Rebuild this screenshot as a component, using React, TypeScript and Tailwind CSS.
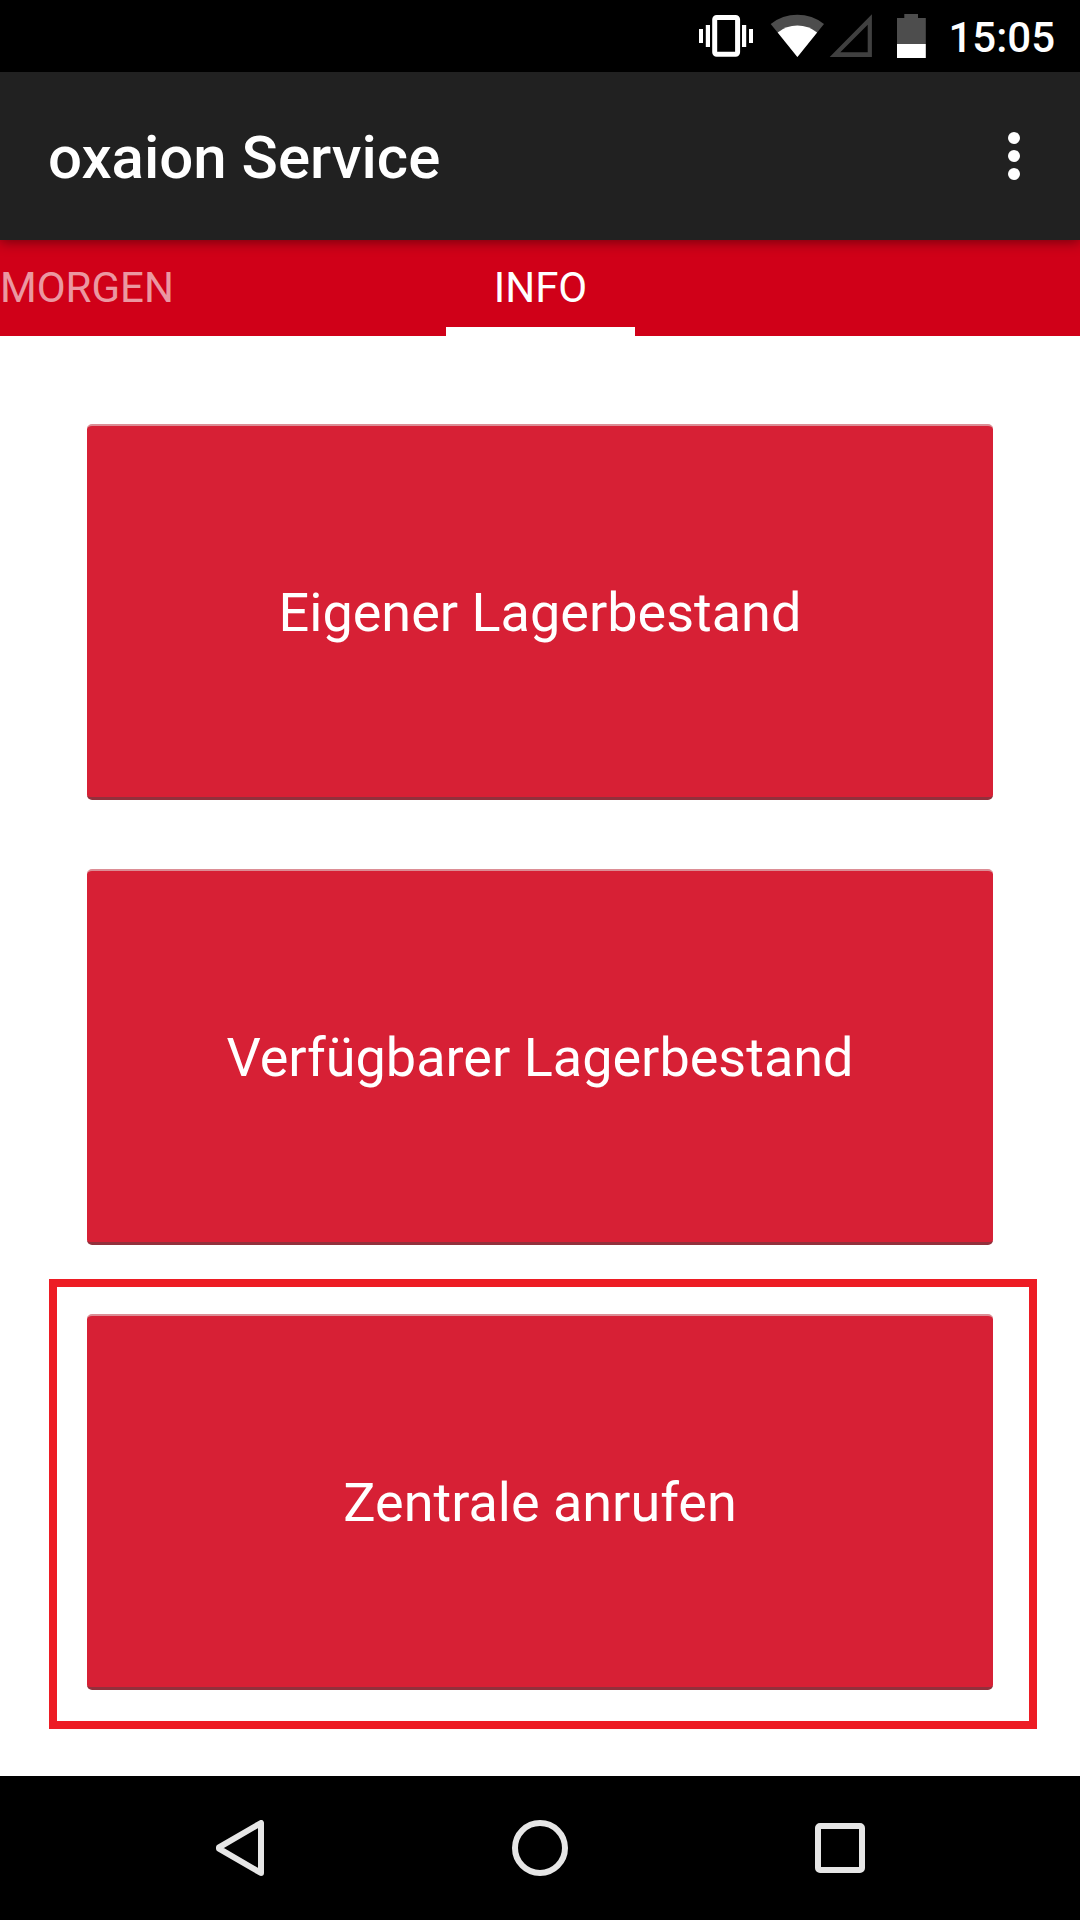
import clsx from 'clsx';

const tabs = [
  { label: 'Morgen', active: false },
  { label: 'Info', active: true },
];

function StatusBar() {
  return (
    <div className="flex h-[72px] items-center justify-end bg-black pr-[25px]">
      {/* Vibrate */}
      <svg className="mr-[17px] h-[72px] w-[54px]" viewBox="701 0 54 72">
        <rect x="716.7" y="17.5" width="22.9" height="36.7" rx="2" fill="none" stroke="#fff" strokeWidth="5" />
        <path d="M701 29h4v14h-4zM707.8 25h4.2v22h-4.2zM744 25h4.2v22H744zM751 29h4v14h-4z" fill="#fff" />
      </svg>

      {/* Wifi */}
      <svg className="mr-[5px] h-[72px] w-[54px]" viewBox="772 0 54 72">
        <path d="M799.4 57 772.7 24A42.6 42.6 0 0 1 826 24Z" fill="#4d4d4d" />
        <path d="M799.4 57 779.7 32.4A31.6 31.6 0 0 1 819.1 32.4Z" fill="#fff" />
      </svg>

      {/* Mobile signal, empty */}
      <svg className="mr-[25px] h-[72px] w-[43px]" viewBox="831 0 43 72">
        <path d="M831.7 57 873.9 14.3V57ZM842.3 52.3H869.7V24.8Z" fill="#404040" fillRule="evenodd" />
      </svg>

      {/* Battery */}
      <svg className="mr-[22px] h-[72px] w-[29px]" viewBox="899 0 29 72">
        <path d="M899 18h7.3v-4H920v4h7.8v26H899z" fill="#4d4d4d" />
        <path d="M899 44h28.8v14H899z" fill="#fff" />
      </svg>

      <span className="pt-[3px] text-[42px] leading-[48px] font-medium text-white">15:05</span>
    </div>
  );
}

function AppBar() {
  return (
    <header className="relative z-10 flex h-[168px] items-center justify-between bg-[#212121] pr-[60px] pl-12 shadow-[0_2px_12px_rgba(0,0,0,0.45)]">
      <h1 className="pt-1 text-[60px] leading-[70px] font-medium text-white">oxaion Service</h1>
      <button className="flex flex-col gap-1.5" aria-label="Menü">
        <span className="size-3 rounded-full bg-white" />
        <span className="size-3 rounded-full bg-white" />
        <span className="size-3 rounded-full bg-white" />
      </button>
    </header>
  );
}

function TabBar() {
  return (
    <nav className="grid h-24 grid-cols-[446px_189px_1fr] bg-[#d00018]">
      {tabs.map((tab) => (
        <button
          key={tab.label}
          className={clsx(
            'border-b-[9px] pt-[9px] text-[42px] leading-[48px] uppercase',
            tab.active ? 'border-white text-center text-white' : 'border-transparent text-left text-white/60'
          )}
        >
          {tab.label}
        </button>
      ))}
    </nav>
  );
}

function ActionButton({ label }: { label: string }) {
  return (
    <button className="flex h-[376px] w-[906px] items-center justify-center rounded-[5px] border-t-2 border-b-[3px] border-t-[#dc8d95] border-b-[#92303c] bg-[#d72035] pt-[3px] text-[54px] leading-[64px] text-white">
      {label}
    </button>
  );
}

function NavigationBar() {
  return (
    <div className="flex h-36 items-center justify-between bg-black pr-[215px] pl-[216px]">
      <svg className="h-14 w-12" viewBox="0 0 48 56" fill="none" stroke="#e6e6e6" strokeWidth="6" strokeLinejoin="round">
        <path d="M45 3v50L3 28.7v-1.4z" />
      </svg>
      <span className="size-14 rounded-full border-6 border-[#e6e6e6]" />
      <span className="size-[50px] rounded-[5px] border-6 border-[#e6e6e6]" />
    </div>
  );
}

export default function App() {
  return (
    <div className="flex h-[1920px] w-[1080px] flex-col overflow-hidden bg-white font-[Roboto,sans-serif]">
      <StatusBar />
      <AppBar />
      <TabBar />
      <main className="flex flex-1 flex-col items-start pt-[88px]">
        <div className="ml-[87px] flex flex-col gap-[69px]">
          <ActionButton label="Eigener Lagerbestand" />
          <ActionButton label="Verfügbarer Lagerbestand" />
        </div>
        {/* Highlighted action */}
        <div className="mt-[34px] ml-[49px] h-[450px] w-[988px] border-8 border-[#ed1c24] pt-[27px] pl-[30px]">
          <ActionButton label="Zentrale anrufen" />
        </div>
      </main>
      <NavigationBar />
    </div>
  );
}
